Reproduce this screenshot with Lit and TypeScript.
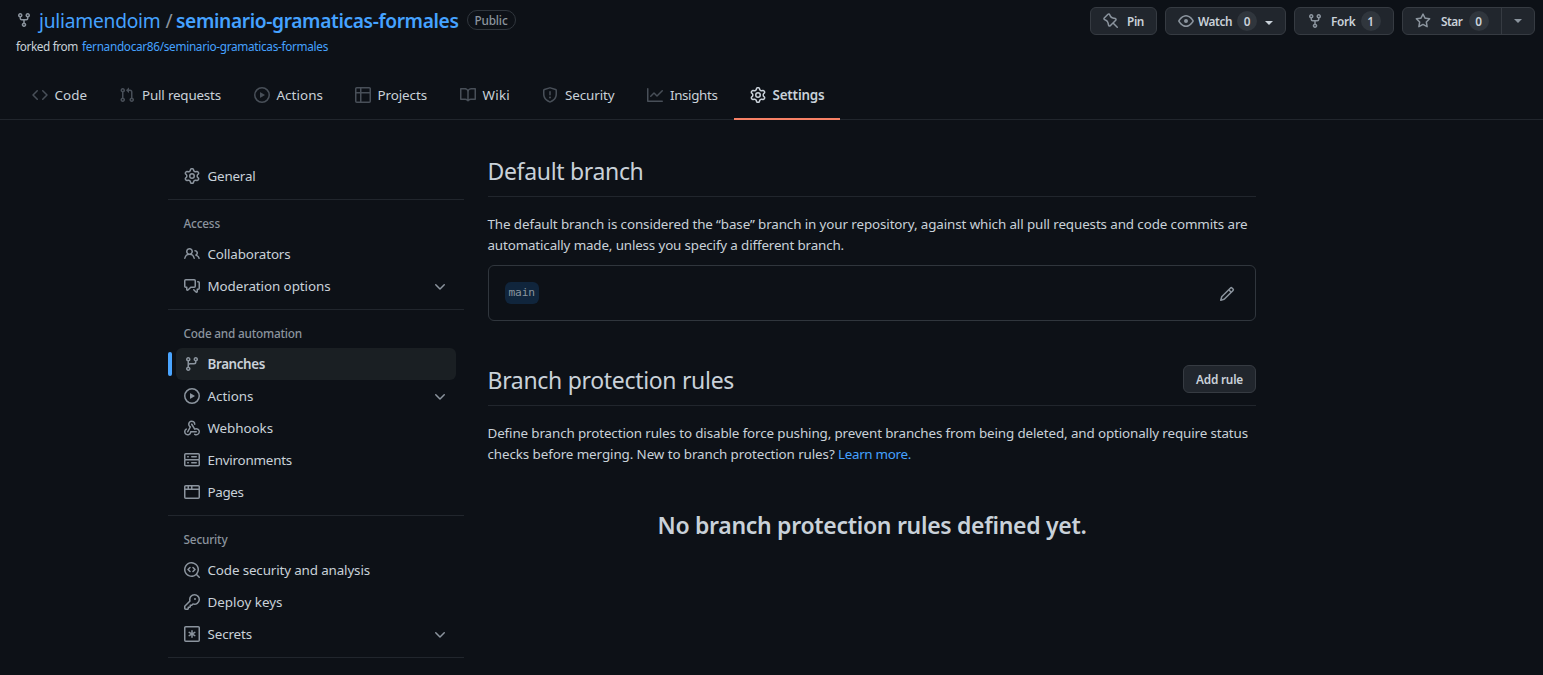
import { LitElement, html, css, svg, nothing } from "lit";
import { customElement, property } from "lit/decorators.js";

const ICONS: Record<string, string> = {
  fork: "M5 3.25a.75.75 0 11-1.5 0 .75.75 0 011.5 0zm0 2.122a2.25 2.25 0 10-1.5 0v.878A2.25 2.25 0 005.75 8.5h1.5v2.128a2.251 2.251 0 101.5 0V8.5h1.5a2.25 2.25 0 002.25-2.25v-.878a2.25 2.25 0 10-1.5 0v.878a.75.75 0 01-.75.75h-4.5A.75.75 0 015 6.25v-.878zm3.75 7.378a.75.75 0 11-1.5 0 .75.75 0 011.5 0zm3-8.75a.75.75 0 100-1.5.75.75 0 000 1.5z",
  code: "M4.72 3.22a.75.75 0 011.06 1.06L2.06 8l3.72 3.72a.75.75 0 11-1.06 1.06L.47 8.53a.75.75 0 010-1.06l4.25-4.25zm6.56 0a.75.75 0 10-1.06 1.06L13.94 8l-3.72 3.72a.75.75 0 101.06 1.06l4.25-4.25a.75.75 0 000-1.06l-4.25-4.25z",
  pull: "M7.177 3.073L9.573.677A.25.25 0 0110 .854v4.792a.25.25 0 01-.427.177L7.177 3.427a.25.25 0 010-.354zM3.75 2.5a.75.75 0 100 1.5.75.75 0 000-1.5zm-2.25.75a2.25 2.25 0 113 2.122v5.256a2.251 2.251 0 11-1.5 0V5.372A2.25 2.25 0 011.5 3.25zM11 2.5h-1V4h1a1 1 0 011 1v5.628a2.251 2.251 0 101.5 0V5A2.5 2.5 0 0011 2.5zm1 10.25a.75.75 0 111.5 0 .75.75 0 01-1.5 0zM3.75 12a.75.75 0 100 1.5.75.75 0 000-1.5z",
  play: "M1.5 8a6.5 6.5 0 1113 0 6.5 6.5 0 01-13 0zM8 0a8 8 0 100 16A8 8 0 008 0zM6.379 5.227A.25.25 0 006 5.442v5.117a.25.25 0 00.379.214l4.264-2.559a.25.25 0 000-.428L6.379 5.227z",
  table: "M0 1.75C0 .784.784 0 1.75 0h12.5C15.216 0 16 .784 16 1.75v12.5A1.75 1.75 0 0114.25 16H1.75A1.75 1.75 0 010 14.25V1.75zM1.5 6.5v7.75c0 .138.112.25.25.25H5v-8H1.5zM5 5H1.5V1.75a.25.25 0 01.25-.25H5V5zm1.5 1.5v8h7.75a.25.25 0 00.25-.25V6.5h-8zm8-1.5h-8V1.5h7.75a.25.25 0 01.25.25V5z",
  book: "M0 1.75A.75.75 0 01.75 1h4.253c1.227 0 2.317.59 3 1.501A3.744 3.744 0 0111.006 1h4.245a.75.75 0 01.75.75v10.5a.75.75 0 01-.75.75h-4.507a2.25 2.25 0 00-1.591.659l-.622.621a.75.75 0 01-1.06 0l-.622-.621A2.25 2.25 0 005.258 13H.75a.75.75 0 01-.75-.75V1.75zm8.755 3a2.25 2.25 0 012.25-2.25H14.5v9h-3.757c-.71 0-1.4.201-1.992.572l.004-7.322zm-1.504 7.324l.004-5.073-.002-2.253A2.25 2.25 0 005.003 2.5H1.5v9h3.757a3.75 3.75 0 011.994.574z",
  shield: "M7.467.133a1.75 1.75 0 011.066 0l5.25 1.68A1.75 1.75 0 0115 3.48V7c0 1.566-.32 3.182-1.303 4.682-.983 1.498-2.585 2.813-5.032 3.855a1.7 1.7 0 01-1.33 0c-2.447-1.042-4.049-2.357-5.032-3.855C1.32 10.182 1 8.566 1 7V3.48a1.75 1.75 0 011.217-1.667l5.25-1.68zm.61 1.429a.25.25 0 00-.153 0l-5.25 1.68a.25.25 0 00-.174.238V7c0 1.358.275 2.666 1.057 3.86.784 1.194 2.121 2.34 4.366 3.297a.2.2 0 00.154 0c2.245-.956 3.582-2.104 4.366-3.298C13.225 9.666 13.5 8.36 13.5 7V3.48a.25.25 0 00-.174-.237l-5.25-1.68zM9 10.5a1 1 0 11-2 0 1 1 0 012 0zm-.25-5.75a.75.75 0 10-1.5 0v3a.75.75 0 001.5 0v-3z",
  graph: "M1.5 1.75a.75.75 0 00-1.5 0v12.5c0 .414.336.75.75.75h14.5a.75.75 0 000-1.5H1.5V1.75zm14.28 2.53a.75.75 0 00-1.06-1.06L10 7.94 7.53 5.47a.75.75 0 00-1.06 0L3.22 8.72a.75.75 0 001.06 1.06L7 7.06l2.47 2.47a.75.75 0 001.06 0l5.25-5.25z",
  gear: "M7.429 1.525a6.593 6.593 0 011.142 0c.036.003.108.036.137.146l.289 1.105c.147.56.55.967.997 1.189.174.086.341.183.501.29.417.278.97.423 1.53.27l1.102-.303c.11-.03.175.016.195.046.219.31.41.641.573.989.014.031.022.11-.059.19l-.815.806c-.411.406-.562.957-.53 1.456a4.588 4.588 0 010 .582c-.032.499.119 1.05.53 1.456l.815.806c.08.08.073.159.059.19a6.494 6.494 0 01-.573.99c-.02.029-.086.074-.195.045l-1.103-.303c-.559-.153-1.112-.008-1.529.27-.16.107-.327.204-.5.29-.449.222-.851.628-.998 1.189l-.289 1.105c-.029.11-.101.143-.137.146a6.613 6.613 0 01-1.142 0c-.036-.003-.108-.037-.137-.146l-.289-1.105c-.147-.56-.55-.967-.997-1.189a4.502 4.502 0 01-.501-.29c-.417-.278-.97-.423-1.53-.27l-1.102.303c-.11.03-.175-.016-.195-.046a6.492 6.492 0 01-.573-.989c-.014-.031-.022-.11.059-.19l.815-.806c.411-.406.562-.957.53-1.456a4.587 4.587 0 010-.582c.032-.499-.119-1.05-.53-1.456l-.815-.806c-.08-.08-.073-.159-.059-.19a6.44 6.44 0 01.573-.99c.02-.029.086-.075.195-.045l1.103.303c.559.153 1.112.008 1.529-.27.16-.107.327-.204.5-.29.449-.222.851-.628.998-1.189l.289-1.105c.029-.11.101-.143.137-.146zM8 0c-.236 0-.47.01-.701.03-.743.065-1.29.615-1.458 1.261l-.29 1.106c-.017.066-.078.158-.211.224a5.994 5.994 0 00-.668.386c-.123.082-.233.09-.3.071L3.27 2.776c-.644-.177-1.392.02-1.82.63a7.977 7.977 0 00-.704 1.217c-.315.675-.111 1.422.363 1.891l.815.806c.05.048.098.147.088.294a6.084 6.084 0 000 .772c.01.147-.038.246-.088.294l-.815.806c-.474.469-.678 1.216-.363 1.891.2.428.436.835.704 1.218.428.609 1.176.806 1.82.63l1.103-.303c.066-.019.176-.011.299.071.213.143.436.272.668.386.133.066.194.158.212.224l.289 1.106c.169.646.715 1.196 1.458 1.26a8.094 8.094 0 001.402 0c.743-.064 1.29-.614 1.458-1.26l.29-1.106c.017-.066.078-.158.211-.224a5.98 5.98 0 00.668-.386c.123-.082.233-.09.3-.071l1.102.302c.644.177 1.392-.02 1.82-.63.268-.382.505-.789.704-1.217.315-.675.111-1.422-.364-1.891l-.814-.806c-.05-.048-.098-.147-.088-.294a6.1 6.1 0 000-.772c-.01-.147.039-.246.088-.294l.814-.806c.475-.469.679-1.216.364-1.891a7.992 7.992 0 00-.704-1.218c-.428-.609-1.176-.806-1.82-.63l-1.103.303c-.066.019-.176.011-.299-.071a5.991 5.991 0 00-.668-.386c-.133-.066-.194-.158-.212-.224L10.16 1.29C9.99.645 9.444.095 8.701.031A8.094 8.094 0 008 0zm1.5 8a1.5 1.5 0 11-3 0 1.5 1.5 0 013 0zM11 8a3 3 0 11-6 0 3 3 0 016 0z",
  people: "M5.5 3.5a2 2 0 100 4 2 2 0 000-4zM2 5.5a3.5 3.5 0 115.898 2.549 5.507 5.507 0 013.034 4.084.75.75 0 11-1.482.235 4.001 4.001 0 00-7.9 0 .75.75 0 01-1.482-.236A5.507 5.507 0 013.102 8.05 3.49 3.49 0 012 5.5zM11 4a.75.75 0 100 1.5 1.5 1.5 0 01.666 2.844.75.75 0 00-.416.672v.352a.75.75 0 00.574.73c1.2.289 2.162 1.2 2.522 2.372a.75.75 0 101.434-.44 5.01 5.01 0 00-2.56-3.012A3 3 0 0011 4z",
  comments: "M1.5 2.75a.25.25 0 01.25-.25h8.5a.25.25 0 01.25.25v5.5a.25.25 0 01-.25.25h-3.5a.75.75 0 00-.53.22L3.5 11.44V9.25a.75.75 0 00-.75-.75h-1a.25.25 0 01-.25-.25v-5.5zM1.75 1A1.75 1.75 0 000 2.75v5.5C0 9.216.784 10 1.75 10H2v1.543a1.457 1.457 0 002.487 1.03L7.061 10h3.189A1.75 1.75 0 0012 8.25v-5.5A1.75 1.75 0 0010.25 1h-8.5zM14.5 4.75a.25.25 0 00-.25-.25h-.5a.75.75 0 110-1.5h.5c.966 0 1.75.784 1.75 1.75v5.5A1.75 1.75 0 0114.25 12H14v1.543a1.457 1.457 0 01-2.487 1.03L9.22 12.28a.75.75 0 111.06-1.06l2.22 2.22v-2.19a.75.75 0 01.75-.75h1a.25.25 0 00.25-.25v-5.5z",
  chevron: "M12.78 6.22a.75.75 0 010 1.06l-4.25 4.25a.75.75 0 01-1.06 0L3.22 7.28a.75.75 0 011.06-1.06L8 9.94l3.72-3.72a.75.75 0 011.06 0z",
  branch: "M11.75 2.5a.75.75 0 100 1.5.75.75 0 000-1.5zm-2.25.75a2.25 2.25 0 113 2.122V6A2.5 2.5 0 0110 8.5H6a1 1 0 00-1 1v1.128a2.251 2.251 0 11-1.5 0V5.372a2.25 2.25 0 111.5 0v1.836A2.492 2.492 0 016 7h4a1 1 0 001-1v-.628A2.25 2.25 0 019.5 3.25zM4.25 12a.75.75 0 100 1.5.75.75 0 000-1.5zM3.5 3.25a.75.75 0 111.5 0 .75.75 0 01-1.5 0z",
  webhook: "M5.5 4.25a2.25 2.25 0 014.5 0 .75.75 0 001.5 0 3.75 3.75 0 10-6.14 2.889l-2.272 4.258a.75.75 0 001.324.706L7 7.25a.75.75 0 00-.309-1.015A2.25 2.25 0 015.5 4.25zM7.364 3.607a.75.75 0 011.03.257l2.608 4.349a3.75 3.75 0 11-.628 6.785.75.75 0 01.752-1.299 2.25 2.25 0 10-.033-3.88.75.75 0 01-1.03-.256L7.107 4.636a.75.75 0 01.257-1.03zM2.9 8.776A.75.75 0 012.625 9.8 2.25 2.25 0 106 11.75a.75.75 0 01.75-.751h5.5a.75.75 0 010 1.5H7.425a3.751 3.751 0 11-5.55-3.998.75.75 0 011.024.274z",
  server: "M1.75 1A1.75 1.75 0 000 2.75v4c0 .372.116.717.314 1a1.742 1.742 0 00-.314 1v4c0 .966.784 1.75 1.75 1.75h12.5A1.75 1.75 0 0016 12.75v-4c0-.372-.116-.717-.314-1 .198-.283.314-.628.314-1v-4A1.75 1.75 0 0014.25 1H1.75zm0 7.5a.25.25 0 00-.25.25v4c0 .138.112.25.25.25h12.5a.25.25 0 00.25-.25v-4a.25.25 0 00-.25-.25H1.75zM1.5 2.75a.25.25 0 01.25-.25h12.5a.25.25 0 01.25.25v4a.25.25 0 01-.25.25H1.75a.25.25 0 01-.25-.25v-4zm5.5 2A.75.75 0 017.75 4h4.5a.75.75 0 010 1.5h-4.5A.75.75 0 017 4.75zM7.75 10a.75.75 0 000 1.5h4.5a.75.75 0 000-1.5h-4.5zM3 4.75A.75.75 0 013.75 4h.5a.75.75 0 010 1.5h-.5A.75.75 0 013 4.75zM3.75 10a.75.75 0 000 1.5h.5a.75.75 0 000-1.5h-.5z",
  browser: "M0 2.75C0 1.784.784 1 1.75 1h12.5c.966 0 1.75.784 1.75 1.75v10.5A1.75 1.75 0 0114.25 15H1.75A1.75 1.75 0 010 13.25V2.75zm1.75-.25a.25.25 0 00-.25.25V4.5h2v-2H1.75zM5 2.5v2h2v-2H5zm3.5 0v2h6V2.75a.25.25 0 00-.25-.25H8.5zm6 3.5h-13v7.25c0 .138.112.25.25.25h12.5a.25.25 0 00.25-.25V6z",
  codescan: "M8.47 4.97a.75.75 0 000 1.06L9.94 7.5 8.47 8.97a.75.75 0 101.06 1.06l2-2a.75.75 0 000-1.06l-2-2a.75.75 0 00-1.06 0zM6.53 6.03a.75.75 0 00-1.06-1.06l-2 2a.75.75 0 000 1.06l2 2a.75.75 0 101.06-1.06L5.06 7.5l1.47-1.47zM12.246 13.307a7.5 7.5 0 111.06-1.06l2.474 2.473a.75.75 0 11-1.06 1.06l-2.474-2.473zM1.5 7.5a6 6 0 1110.386 4.094.75.75 0 00-.292.293A6 6 0 011.5 7.5z",
  key: "M6.5 5.5a4 4 0 112.731 3.795.75.75 0 00-.768.18L7.44 10.5H6.25a.75.75 0 00-.75.75v1.19l-.06.06H4.25a.75.75 0 00-.75.75v1.19l-.06.06H1.75a.25.25 0 01-.25-.25v-1.69l5.024-5.023a.75.75 0 00.181-.768A3.995 3.995 0 016.5 5.5zm4-5.5a5.5 5.5 0 00-5.348 6.788L.22 11.72a.75.75 0 00-.22.53v2C0 15.216.784 16 1.75 16h2a.75.75 0 00.53-.22l.5-.5a.75.75 0 00.22-.53V14h.75a.75.75 0 00.53-.22l.5-.5a.75.75 0 00.22-.53V12h.75a.75.75 0 00.53-.22l.932-.932A5.5 5.5 0 1010.5 0zm.5 6a1 1 0 100-2 1 1 0 000 2z",
  secret: "M1.75 0h12.5C15.216 0 16 .784 16 1.75v12.5A1.75 1.75 0 0114.25 16H1.75A1.75 1.75 0 010 14.25V1.75C0 .784.784 0 1.75 0zM1.5 1.75v12.5c0 .138.112.25.25.25h12.5a.25.25 0 00.25-.25V1.75a.25.25 0 00-.25-.25H1.75a.25.25 0 00-.25.25zM8 4a.75.75 0 01.75.75V6.7l1.69-.975a.75.75 0 01.75 1.3L9.5 8l1.69.976a.75.75 0 01-.75 1.298L8.75 9.3v1.951a.75.75 0 01-1.5 0V9.299l-1.69.976a.75.75 0 01-.75-1.3L6.5 8l-1.69-.975a.75.75 0 01.75-1.3l1.69.976V4.75A.75.75 0 018 4z",
  pin: "M4.456.734a1.75 1.75 0 012.826.504l.613 1.327a3.081 3.081 0 002.084 1.707l2.454.584c1.332.317 1.8 1.972.832 2.94L11.06 10l3.72 3.72a.75.75 0 11-1.061 1.06L10 11.06l-2.204 2.205c-.968.968-2.623.5-2.94-.832l-.584-2.454a3.081 3.081 0 00-1.707-2.084l-1.327-.613a1.75 1.75 0 01-.504-2.826L4.456.734zM5.92 1.866a.25.25 0 00-.404-.072L1.794 5.516a.25.25 0 00.072.404l1.328.613A4.582 4.582 0 015.73 9.63l.584 2.454a.25.25 0 00.42.12l5.47-5.47a.25.25 0 00-.12-.42L9.63 5.73a4.581 4.581 0 01-3.098-2.537L5.92 1.866z",
  eye: "M1.679 7.932c.412-.621 1.242-1.75 2.366-2.717C5.175 4.242 6.527 3.5 8 3.5c1.473 0 2.824.742 3.955 1.715 1.124.967 1.954 2.096 2.366 2.717a.119.119 0 010 .136c-.412.621-1.242 1.75-2.366 2.717C10.825 11.758 9.473 12.5 8 12.5c-1.473 0-2.824-.742-3.955-1.715C2.92 9.818 2.09 8.69 1.679 8.068a.119.119 0 010-.136zM8 2c-1.981 0-3.67.992-4.933 2.078C1.797 5.169.88 6.423.43 7.1a1.619 1.619 0 000 1.798c.45.678 1.367 1.932 2.637 3.024C4.329 13.008 6.019 14 8 14c1.981 0 3.67-.992 4.933-2.078 1.27-1.091 2.187-2.345 2.637-3.023a1.619 1.619 0 000-1.798c-.45-.678-1.367-1.932-2.637-3.023C11.671 2.992 9.981 2 8 2zm0 8a2 2 0 100-4 2 2 0 000 4z",
  star: "M8 .25a.75.75 0 01.673.418l1.882 3.815 4.21.612a.75.75 0 01.416 1.279l-3.046 2.97.719 4.192a.75.75 0 01-1.088.791L8 12.347l-3.766 1.98a.75.75 0 01-1.088-.79l.72-4.194L.818 6.374a.75.75 0 01.416-1.28l4.21-.611L7.327.668A.75.75 0 018 .25zm0 2.445L6.615 5.5a.75.75 0 01-.564.41l-3.097.45 2.24 2.184a.75.75 0 01.216.664l-.528 3.084 2.769-1.456a.75.75 0 01.698 0l2.77 1.456-.53-3.084a.75.75 0 01.216-.664l2.24-2.183-3.096-.45a.75.75 0 01-.564-.41L8 2.694v.001z",
  pencil: "M11.013 1.427a1.75 1.75 0 012.474 0l1.086 1.086a1.75 1.75 0 010 2.474l-8.61 8.61c-.21.21-.47.364-.756.445l-3.251.93a.75.75 0 01-.927-.928l.929-3.25a1.75 1.75 0 01.445-.758l8.61-8.61zm1.414 1.06a.25.25 0 00-.354 0L10.811 3.75l1.439 1.44 1.263-1.263a.25.25 0 000-.354l-1.086-1.086zM11.189 6.25L9.75 4.81l-6.286 6.287a.25.25 0 00-.064.108l-.558 1.953 1.953-.558a.249.249 0 00.108-.064l6.286-6.286z",
};

const icon = (name: string) => html`<svg class="icon" width="16" height="16" viewBox="0 0 16 16" fill="currentColor" aria-hidden="true">
  ${svg`<path fill-rule="evenodd" d=${ICONS[name]}></path>`}
</svg>`;

/** One line of text, tracked so that it fills exactly `width` pixels. */
@customElement("fit-text")
export class FitText extends LitElement {
  @property() text = "";
  @property({ type: Number }) width = 0;

  static styles = css`
    :host { display: inline-block; white-space: pre; flex: none; }
    .run { display: inline-block; }
  `;

  firstUpdated() {
    const run = this.renderRoot.querySelector(".run") as HTMLElement;
    const natural = run.getBoundingClientRect().width;
    const spacing = (this.width - natural) / this.text.length;
    run.style.letterSpacing = `${spacing.toFixed(4)}px`;
  }

  render() {
    return html`<span class="run">${this.text}</span>`;
  }
}

const fit = (text: string, width: number) => html`<fit-text .text=${text} .width=${width}></fit-text>`;

interface Tab { icon: string; label: string; text: number; width: number; active?: boolean; }
const TABS: Tab[] = [
  { icon: "code", label: "Code", text: 32.5, width: 87.5 },
  { icon: "pull", label: "Pull requests", text: 79, width: 134.5 },
  { icon: "play", label: "Actions", text: 46.5, width: 101 },
  { icon: "table", label: "Projects", text: 49.5, width: 105 },
  { icon: "book", label: "Wiki", text: 27.5, width: 82.5 },
  { icon: "shield", label: "Security", text: 49.5, width: 105 },
  { icon: "graph", label: "Insights", text: 47.5, width: 102.5 },
  { icon: "gear", label: "Settings", text: 52, width: 106, active: true },
];

interface Item { icon: string; label: string; text: number; active?: boolean; expandable?: boolean; }
interface Group { title?: string; titleWidth?: number; items: Item[]; }
const GROUPS: Group[] = [
  { items: [{ icon: "gear", label: "General", text: 48 }] },
  {
    title: "Access", titleWidth: 36.5,
    items: [
      { icon: "people", label: "Collaborators", text: 83 },
      { icon: "comments", label: "Moderation options", text: 123, expandable: true },
    ],
  },
  {
    title: "Code and automation", titleWidth: 118.5,
    items: [
      { icon: "branch", label: "Branches", text: 57.5, active: true },
      { icon: "play", label: "Actions", text: 46, expandable: true },
      { icon: "webhook", label: "Webhooks", text: 65.5 },
      { icon: "server", label: "Environments", text: 84.5 },
      { icon: "browser", label: "Pages", text: 36 },
    ],
  },
  {
    title: "Security", titleWidth: 44,
    items: [
      { icon: "codescan", label: "Code security and analysis", text: 162.5 },
      { icon: "key", label: "Deploy keys", text: 75 },
      { icon: "secret", label: "Secrets", text: 44.5, expandable: true },
    ],
  },
];

@customElement("app-root")
export class AppRoot extends LitElement {
  static styles = css`
    :host {
      display: block;
      box-sizing: border-box;
      height: 675px;
      overflow: hidden;
      background: #0d1117;
      color: #c9d1d9;
      font-family: "Noto Sans", "Open Sans", sans-serif;
      font-size: 13.4px;
      line-height: 21px;
    }
    * { box-sizing: border-box; }
    .icon { display: block; flex: none; }
    .link { color: #45a2ff; }

    .top { display: flex; justify-content: space-between; height: 71px; padding: 6px 8px 0 16px; }
    .title { display: flex; align-items: center; height: 30px; font-size: 19.2px; line-height: 30px; color: #8b949e; }
    .title .icon { margin: -2px 7px 0 0; }
    .slash { width: 15.5px; padding-left: 5px; }
    .repo { font-weight: 600; }
    .public {
      height: 20px; margin: -2px 0 0 8px; padding: 0 7px; border: 1px solid #30363d; border-radius: 10px;
      font-size: 11.8px; line-height: 18px; font-weight: 500;
    }
    .forked { display: flex; gap: 4px; font-size: 11.8px; line-height: 18px; padding-top: 1px; }

    .actions { display: flex; gap: 8px; padding-top: 1px; }
    .btn {
      display: flex; align-items: center; height: 28px; border: 1px solid #363b42; border-radius: 6px;
      background: #21262d; font-size: 11.8px; font-weight: 600; line-height: 20px;
    }
    .btn .icon { color: #8b949e; }
    .pin { width: 67px; padding-left: 12px; gap: 8px; }
    .watch { width: 121px; padding-left: 12px; gap: 4px; }
    .fork { width: 100px; padding-left: 12px; gap: 8px; }
    .star { width: 133px; padding-left: 12px; gap: 10px; }
    .count {
      min-width: 20px; height: 20px; border-radius: 10px; background: #30363d; text-align: center; line-height: 20px;
      margin-left: 1px;
    }
    .fork .count { margin-left: -3px; }
    .star .count { margin-left: -4px; }
    .caret { width: 0; height: 0; border: 4px solid transparent; border-top-color: currentColor; border-bottom: 0; }
    .watch .caret { margin: 3px 0 0 4px; }
    .more { display: flex; align-items: center; justify-content: center; width: 33px; height: 26px; margin-left: auto; border-left: 1px solid #363b42; color: #8b949e; }

    .tabs { display: flex; height: 49px; padding-left: 15.5px; border-bottom: 1px solid #21262d; }
    .tab { display: flex; align-items: center; gap: 7px; height: 49px; padding: 0 0 1px 16px; flex: none; }
    .tab .icon { color: #484f58; }
    .tab.active { font-weight: 600; border-bottom: 2px solid #f78166; padding: 1px 0 0 16px; }
    .tab.active .icon { color: #c9d1d9; }

    .page { display: flex; gap: 24px; padding: 32px 0 0 168px; }
    .side { width: 296px; flex: none; padding-top: 8px; }
    .group { border-bottom: 1px solid #21262d; padding-bottom: 7px; margin-bottom: 8px; }
    .heading { height: 30px; padding: 6px 0 0 15.5px; font-size: 11.8px; line-height: 18px; font-weight: 500; color: #8b949e; }
    .item { display: flex; align-items: center; height: 32px; }
    .bar { width: 4px; height: 24px; border-radius: 6px; margin-right: 4px; }
    .pill { display: flex; align-items: center; gap: 7.5px; width: 280px; height: 32px; border-radius: 6px; padding: 0 8px; }
    .pill .icon { color: #8b949e; }
    .pill .chev { margin-left: auto; }
    .item.active .bar { background: #4aa5ff; }
    .item.active .pill { background: #1a1f23; font-weight: 600; }

    .main { width: 768px; }
    .sub { display: flex; align-items: flex-start; justify-content: space-between; height: 45px; border-bottom: 1px solid #21262d; font-size: 23px; line-height: 36px; }
    .sub .label { margin: 1px 0 0 -0.5px; }
    .copy { padding-top: 17px; }
    .line { height: 21px; margin-left: -0.5px; display: flex; }
    .box { display: flex; align-items: center; justify-content: space-between; height: 56px; margin-top: 9px; padding: 0 20px 0 16px; border: 1px solid #30363d; border-radius: 6px; }
    .branch { height: 22px; padding: 0 3.5px; margin-top: -1px; border-radius: 6px; background: #10253c; color: #8b949e; font: 11.2px/21px "DejaVu Sans Mono", monospace; }
    .box .icon { width: 16px; color: #8b949e; margin-top: 2px; }
    .rules { margin-top: 40px; }
    .add { padding: 0 12px; margin-top: 4px; }
    .blank { display: flex; justify-content: center; padding-top: 42px; font-size: 23px; font-weight: 600; line-height: 36px; }
  `;

  private header() {
    return html`
      <header class="top">
        <div>
          <div class="title">
            ${icon("fork")}
            <span class="link">${fit("juliamendoim", 121.5)}</span>
            <span class="slash">/</span>
            <span class="link repo">${fit("seminario-gramaticas-formales", 282.5)}</span>
            <span class="public">${fit("Public", 33)}</span>
          </div>
          <div class="forked">
            ${fit("forked from", 62)}
            <span class="link">${fit("fernandocar86/seminario-gramaticas-formales", 246)}</span>
          </div>
        </div>
        <div class="actions">
          <div class="btn pin">${icon("pin")}${fit("Pin", 17)}</div>
          <div class="btn watch">${icon("eye")}${fit("Watch", 34)}<span class="count">0</span><span class="caret"></span></div>
          <div class="btn fork">${icon("fork")}${fit("Fork", 24.5)}<span class="count">1</span></div>
          <div class="btn star">${icon("star")}${fit("Star", 21.5)}<span class="count">0</span><span class="more"><span class="caret"></span></span></div>
        </div>
      </header>`;
  }

  private tab(t: Tab) {
    return html`<div class="tab ${t.active ? "active" : ""}" style="width:${t.width}px">${icon(t.icon)}${fit(t.label, t.text)}</div>`;
  }

  private item(i: Item) {
    return html`<div class="item ${i.active ? "active" : ""}">
      <span class="bar"></span>
      <div class="pill">
        ${icon(i.icon)}${fit(i.label, i.text)}
        ${i.expandable ? html`<span class="chev">${icon("chevron")}</span>` : nothing}
      </div>
    </div>`;
  }

  render() {
    return html`
      ${this.header()}
      <nav class="tabs">${TABS.map((t) => this.tab(t))}</nav>
      <div class="page">
        <aside class="side">
          ${GROUPS.map((g) => html`<div class="group">
            ${g.title ? html`<div class="heading">${fit(g.title, g.titleWidth ?? 0)}</div>` : nothing}
            ${g.items.map((i) => this.item(i))}
          </div>`)}
        </aside>
        <main class="main">
          <div class="sub"><span class="label">${fit("Default branch", 156)}</span></div>
          <div class="copy">
            <div class="line">${fit("The default branch is considered the “base” branch in your repository, against which all pull requests and code commits are", 760)}</div>
            <div class="line">${fit("automatically made, unless you specify a different branch.", 356.5)}</div>
          </div>
          <div class="box"><span class="branch">${fit("main", 26.5)}</span>${icon("pencil")}</div>
          <div class="sub rules">
            <span class="label">${fit("Branch protection rules", 246.5)}</span>
            <span class="btn add">${fit("Add rule", 47)}</span>
          </div>
          <div class="copy">
            <div class="line">${fit("Define branch protection rules to disable force pushing, prevent branches from being deleted, and optionally require status", 760.5)}</div>
            <div class="line">${fit("checks before merging. New to branch protection rules? ", 350.5)}<span class="link">${fit("Learn more.", 73)}</span></div>
          </div>
          <div class="blank">${fit("No branch protection rules defined yet.", 429)}</div>
        </main>
      </div>`;
  }
}
